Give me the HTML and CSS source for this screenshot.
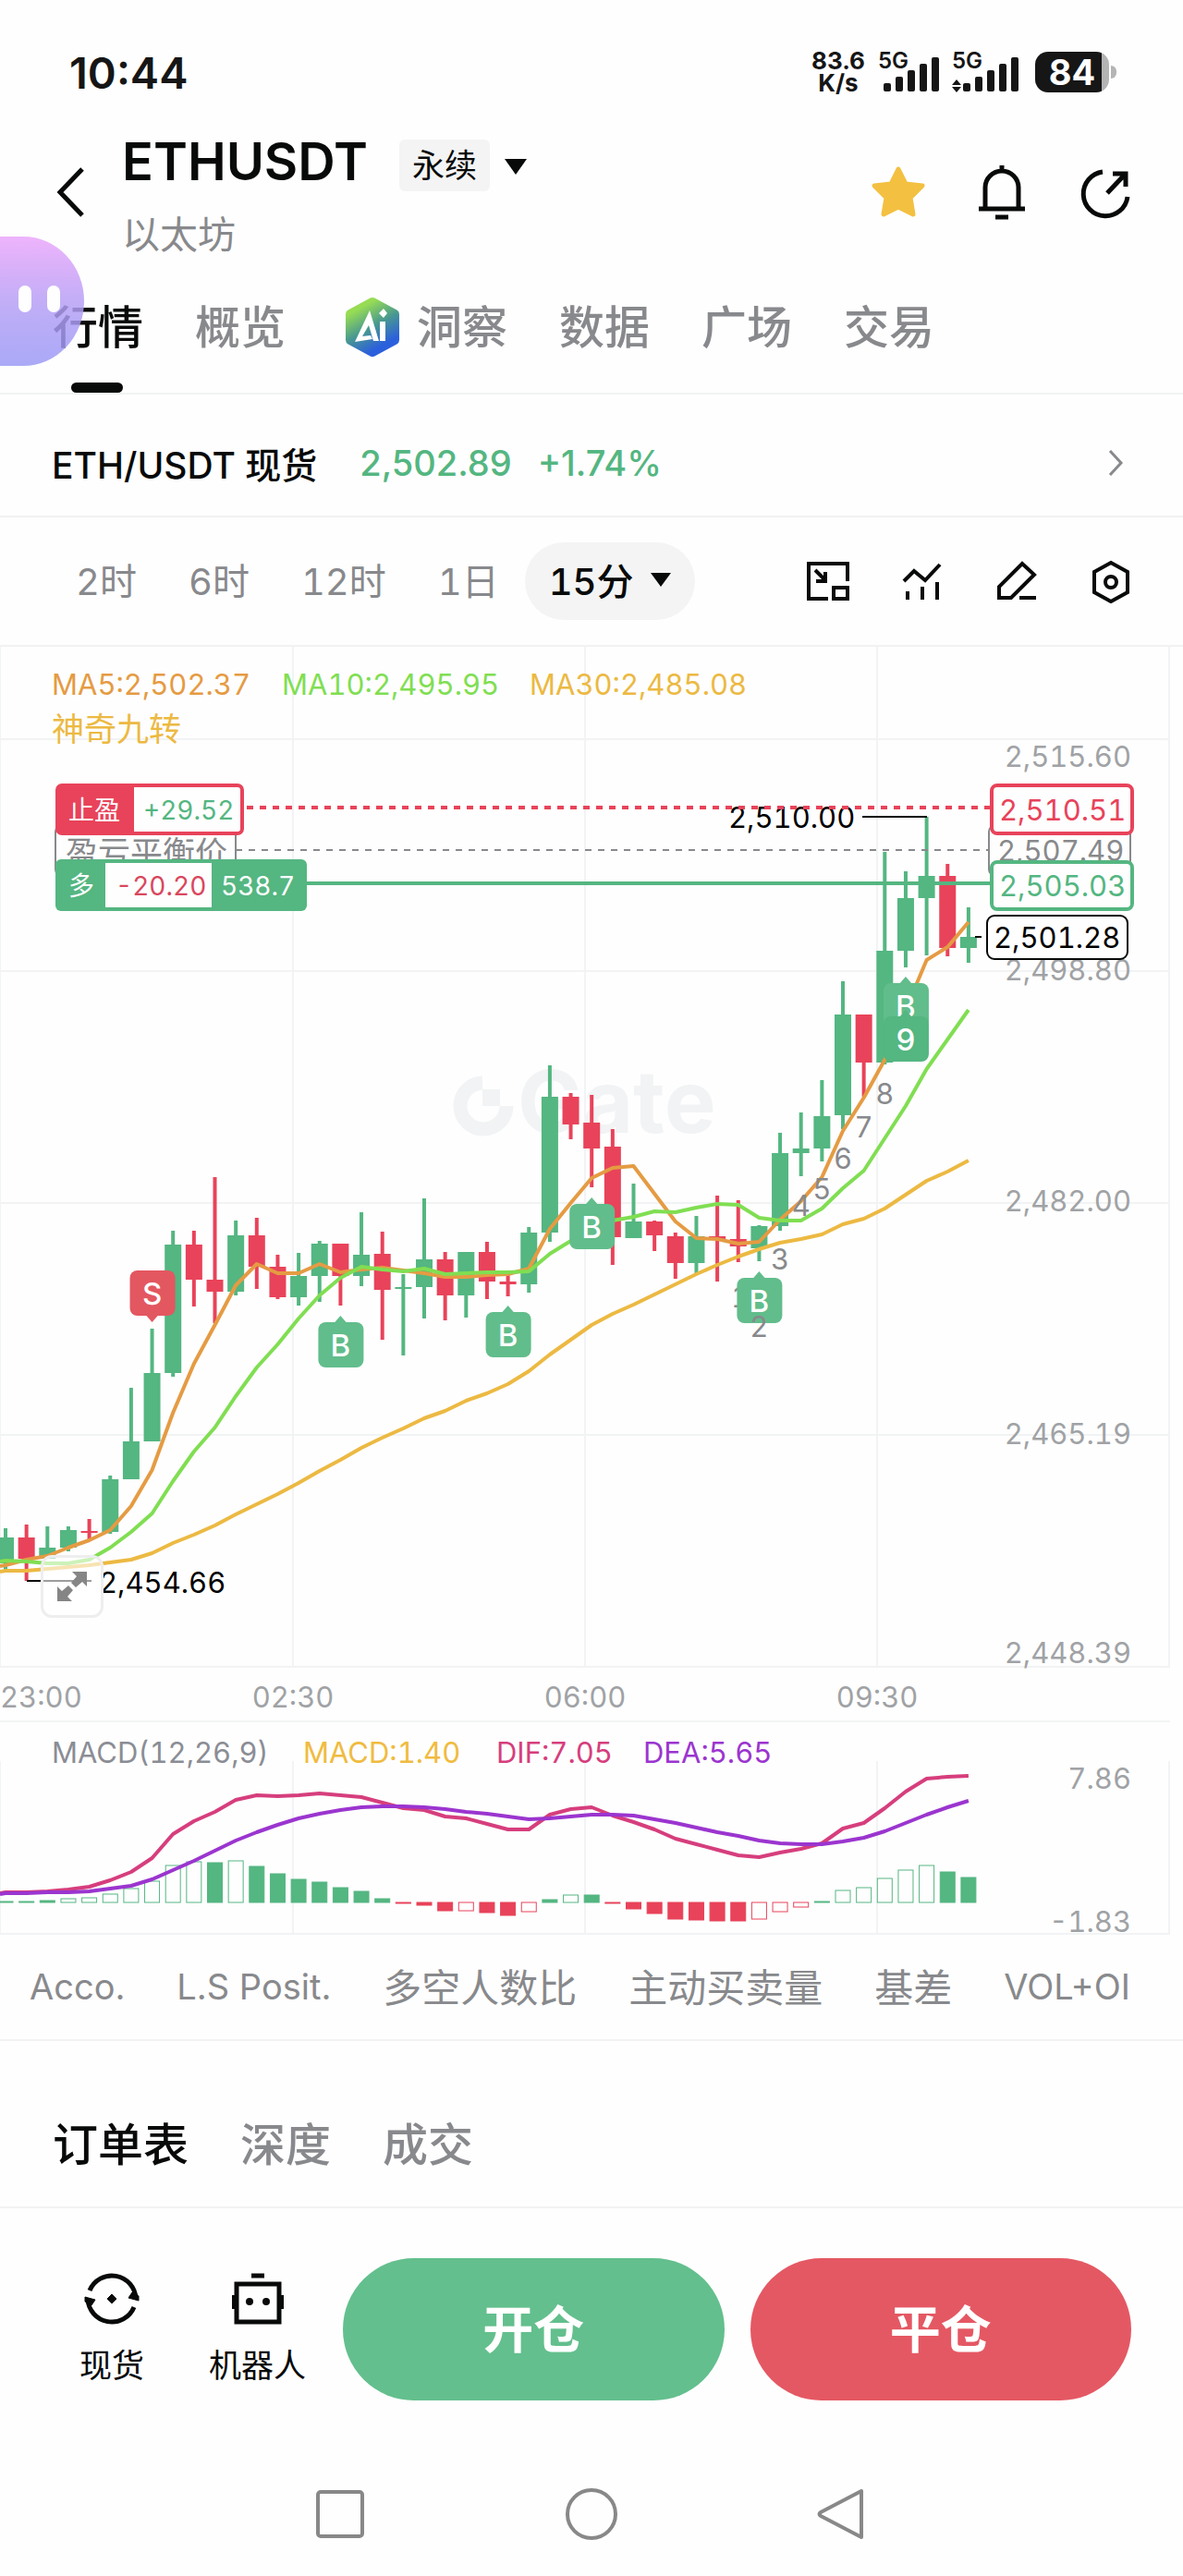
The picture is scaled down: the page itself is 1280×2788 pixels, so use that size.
FILE: index.html
```html
<!DOCTYPE html>
<html lang="zh-CN">
<head>
  <meta charset="UTF-8" />
  <meta name="viewport" content="width=device-width, initial-scale=1" />
  <title>ETHUSDT 永续</title>
  <link rel="stylesheet" href="styles.css">
</head>
<body>

  <div class="status-bar">
    <span class="clock">10:44</span>
    <div class="status-right">
      <div class="speed"><span>83.6</span><span>K/s</span></div>
      <div class="signal">
        <span class="net">5G</span>
        <svg width="66" height="46" viewBox="0 0 66 46" fill="#161616">
          <rect x="6" y="35" width="8" height="9" rx="2"/><rect x="19" y="28" width="8" height="16" rx="2"/><rect x="32" y="21" width="8" height="23" rx="2"/><rect x="45" y="14" width="8" height="30" rx="2"/><rect x="58" y="7" width="8" height="37" rx="2"/>
        </svg>
      </div>
      <div class="signal">
        <span class="net">5G</span>
        <svg width="72" height="46" viewBox="0 0 72 46" fill="#161616">
          <path d="M0 37l5-6 5 6zM0 39h10l-5 6z"/>
          <rect x="12" y="35" width="8" height="9" rx="2"/><rect x="25" y="28" width="8" height="16" rx="2"/><rect x="38" y="21" width="8" height="23" rx="2"/><rect x="51" y="14" width="8" height="30" rx="2"/><rect x="64" y="7" width="8" height="37" rx="2"/>
        </svg>
      </div>
      <div class="battery"><span class="level">84</span></div>
    </div>
  </div>

  <header class="header">
    <button class="icon-btn" aria-label="返回">
      <svg width="32" height="56" viewBox="0 0 32 56" fill="none" stroke="#080a09" stroke-width="5"><path d="M29 3L5 28l24 25"/></svg>
    </button>
    <div class="pair">
      <div class="pair-top">
        <h1>ETHUSDT</h1>
        <span class="badge">永续</span>
        <button class="icon-btn caret" aria-label="切换交易对">
          <svg width="24" height="17" viewBox="0 0 24 17"><path d="M0 0h24L12 17z" fill="#080a09"/></svg>
        </button>
      </div>
      <p class="pair-name">以太坊</p>
    </div>
    <div class="header-actions">
      <button class="icon-btn" aria-label="收藏">
        <svg width="60" height="60" viewBox="0 0 60 60"><path d="M30 5l8 16 18 2-13 13 3 18-16-8-16 8 3-18L4 23l18-2z" fill="#f3c041" stroke="#f3c041" stroke-width="5" stroke-linejoin="round"/></svg>
      </button>
      <button class="icon-btn" aria-label="提醒">
        <svg width="60" height="60" viewBox="0 0 60 60" fill="none" stroke="#080a09" stroke-width="5"><path d="M30 1v7M12 47V25a18 18 0 0 1 36 0v22M5 48h50M23 57h14"/></svg>
      </button>
      <button class="icon-btn" aria-label="分享">
        <svg width="60" height="60" viewBox="0 0 60 60" fill="none" stroke="#080a09" stroke-width="5"><path d="M27 8A24 24 0 1 0 54 35M32 31L51 11M38 10h14v14"/></svg>
      </button>
    </div>
  </header>

  <nav class="tabs">
    <a href="#" class="tab active">行情</a>
    <a href="#" class="tab">概览</a>
    <a href="#" class="tab tab-ai">
      <svg width="60" height="66" viewBox="0 0 60 66">
        <defs><linearGradient id="ai" x1="0.2" y1="0" x2="0.7" y2="1"><stop offset="0.1" stop-color="#97dc54"/><stop offset="0.5" stop-color="#4a9a8f"/><stop offset="0.9" stop-color="#2b60dc"/></linearGradient></defs>
        <path d="M30 6L54 19v28L30 60 6 47V19z" fill="url(#ai)" stroke="url(#ai)" stroke-width="10" stroke-linejoin="round"/>
        <path d="M27 15l10 33h-6l-5-17-7 12 9-1 2 4-19 3z" fill="#fff"/>
        <path d="M38 27h6v21h-6zM42 13l4 5-4 5-5-5z" fill="#fff"/>
      </svg>
      <span>洞察</span>
    </a>
    <a href="#" class="tab">数据</a>
    <a href="#" class="tab">广场</a>
    <a href="#" class="tab">交易</a>
    <div class="mascot"><i></i><i></i></div>
  </nav>

  <a href="#" class="spot">
    <span class="spot-name">ETH/USDT 现货</span>
    <span class="up">2,502.89</span>
    <span class="up change">+1.74%</span>
    <svg class="spot-arrow" width="18" height="30" viewBox="0 0 18 30" fill="none" stroke="#88898c" stroke-width="3"><path d="M3 2l12 13L3 28"/></svg>
  </a>

  <div class="periods">
    <div class="period-list">
      <button class="period">2时</button>
      <button class="period">6时</button>
      <button class="period">12时</button>
      <button class="period">1日</button>
    </div>
    <button class="period selected">15分
      <svg width="22" height="15" viewBox="0 0 22 15"><path d="M0 0h22L11 15z" fill="#080a09"/></svg>
    </button>
    <div class="tools">
      <button class="icon-btn" aria-label="小窗">
        <svg width="48" height="48" viewBox="0 0 48 48" fill="none" stroke="#080a09" stroke-width="4"><path d="M24 43H3V5h42v19M30 31h15v12H30zM10 12l11 11M21 14v10H11"/></svg>
      </button>
      <button class="icon-btn" aria-label="指标">
        <svg width="48" height="48" viewBox="0 0 48 48" fill="none" stroke="#080a09" stroke-width="4"><path d="M4 24l11-11 12 10L43 6M8 44v-9M24 44V30M40 44V25"/></svg>
      </button>
      <button class="icon-btn" aria-label="画图">
        <svg width="48" height="48" viewBox="0 0 48 48" fill="none" stroke="#080a09" stroke-width="4"><path d="M30 5l13 12-25 25H5V30zM27 42h18"/></svg>
      </button>
      <button class="icon-btn" aria-label="设置">
        <svg width="48" height="48" viewBox="0 0 48 48" fill="none" stroke="#080a09" stroke-width="4"><path d="M24 4l18 10v22L24 46 6 36V14z"/><circle cx="24" cy="25" r="6"/></svg>
      </button>
    </div>
  </div>

  <div class="chart">
    <svg id="chart" viewBox="0 0 1280 1394"></svg>
    <button class="expand" aria-label="全屏">
      <svg width="34" height="34" viewBox="0 0 34 34" fill="#858585"><path d="M17 1h16v16l-5-5-7 6-5-5 6-7zM17 33H1V17l5 5 7-6 5 5-6 7z"/></svg>
    </button>
  </div>

  <nav class="indicators">
    <a href="#" class="latin">Acco.</a>
    <a href="#" class="latin">L.S Posit.</a>
    <a href="#">多空人数比</a>
    <a href="#">主动买卖量</a>
    <a href="#">基差</a>
    <a href="#" class="latin">VOL+OI</a>
  </nav>

  <nav class="book-tabs">
    <a href="#" class="active">订单表</a>
    <a href="#">深度</a>
    <a href="#">成交</a>
  </nav>

  <div class="trade-bar">
    <a href="#" class="shortcut">
      <svg width="60" height="60" viewBox="0 0 60 60" fill="none" stroke="#080a09" stroke-width="5"><path d="M6 21a26 26 0 0 1 50 9M54 39a26 26 0 0 1-50-9"/><path d="M59 32l-11-3 4-6 7 4zM1 28l11 3-4 6-7-4zM30 25l5 5-5 5-5-5z" fill="#080a09" stroke-width="1"/></svg>
      <span>现货</span>
    </a>
    <a href="#" class="shortcut">
      <svg width="60" height="60" viewBox="0 0 60 60" fill="none" stroke="#080a09" stroke-width="5"><path d="M23 5h14M7 14h46v41H7z"/><path d="M4 26v15M56 26v15" stroke-width="4"/><circle cx="21" cy="33" r="4" fill="#080a09" stroke="none"/><circle cx="39" cy="33" r="4" fill="#080a09" stroke="none"/></svg>
      <span>机器人</span>
    </a>
    <button class="trade open">开仓</button>
    <button class="trade close">平仓</button>
  </div>

  <div class="system-nav">
    <button class="icon-btn" aria-label="最近任务"><svg width="60" height="60" viewBox="0 0 60 60" fill="none" stroke="#888" stroke-width="4"><rect x="6" y="6" width="48" height="48" rx="3"/></svg></button>
    <button class="icon-btn" aria-label="主页"><svg width="60" height="60" viewBox="0 0 60 60" fill="none" stroke="#888" stroke-width="4"><circle cx="30" cy="30" r="26"/></svg></button>
    <button class="icon-btn" aria-label="后退"><svg width="60" height="60" viewBox="0 0 60 60" fill="none" stroke="#888" stroke-width="4" stroke-linejoin="round"><path d="M50 5v50L6 32q-3-2 0-4z"/></svg></button>
  </div>

  <script src="chart.js"></script>
</body>
</html>
```

FILE: styles.css
```css
* {
  box-sizing: border-box;
}

body {
  margin: 0;
  background: #fefefe;
  color: #080a09;
  font-family: Inter, "Noto Sans CJK SC", sans-serif;
}

a {
  color: inherit;
  text-decoration: none;
}

button {
  font: inherit;
  color: inherit;
  border: none;
  background: none;
  padding: 0;
  cursor: pointer;
}

svg {
  display: block;
}

.icon-btn {
  display: flex;
}

/* status bar */
.status-bar {
  display: flex;
  justify-content: space-between;
  align-items: center;
  height: 140px;
  padding: 16px 80px 0 75px;
  color: #161616;
}

.clock {
  font-size: 47px;
  font-weight: 600;
}

.status-right {
  display: flex;
  align-items: center;
  gap: 14px;
}

.speed {
  display: flex;
  flex-direction: column;
  align-items: center;
  font-size: 26px;
  font-weight: 700;
  line-height: 24px;
}

.signal {
  position: relative;
}

.net {
  position: absolute;
  left: 0;
  top: 0;
  font-size: 24px;
  font-weight: 600;
  line-height: 22px;
}

.battery {
  position: relative;
  width: 80px;
  height: 44px;
  margin-left: 4px;
  border-radius: 14px;
  background: linear-gradient(90deg, #161616 72px, #b4b4b4 72px);
  color: #fff;
  text-align: center;
}

.battery::after {
  content: "";
  position: absolute;
  left: 82px;
  top: 15px;
  width: 6px;
  height: 14px;
  border-radius: 0 6px 6px 0;
  background: #b4b4b4;
}

.level {
  font-size: 38px;
  font-weight: 700;
  line-height: 44px;
}

/* header */
.header {
  display: flex;
  align-items: center;
  height: 144px;
  padding: 0 54px 8px 60px;
}

.pair {
  flex: 1;
  margin-left: 40px;
}

.pair-top {
  display: flex;
  align-items: center;
}

h1 {
  margin: 0;
  font-size: 56px;
  font-weight: 600;
  line-height: 72px;
}

.badge {
  margin: 8px 16px 0 34px;
  padding: 0 14px;
  border-radius: 6px;
  background: #f4f4f4;
  font-size: 35px;
  line-height: 56px;
}

.caret {
  margin-top: 12px;
}

.pair-name {
  margin: 19px 0 0;
  font-size: 41px;
  line-height: 48px;
  color: #88898c;
}

.header-actions {
  display: flex;
  gap: 52px;
}

/* main tabs */
.tabs {
  position: relative;
  display: flex;
  gap: 56px;
  height: 143px;
  padding-left: 57px;
  border-bottom: 2px solid #f1f2f3;
}

.tab {
  position: relative;
  display: flex;
  align-items: center;
  padding-bottom: 8px;
  font-size: 49px;
  font-weight: 500;
  color: #88898c;
}

.tab.active {
  color: #080a09;
}

.tab.active::after {
  content: "";
  position: absolute;
  left: 20px;
  bottom: 0;
  width: 56px;
  height: 11px;
  border-radius: 6px;
  background: #080a09;
}

.tab-ai {
  gap: 18px;
  margin-left: 8px;
}

.tab-ai svg {
  margin-top: 6px;
}

.mascot {
  position: absolute;
  left: 0;
  top: -28px;
  width: 91px;
  height: 140px;
  display: flex;
  gap: 17px;
  padding: 53px 0 0 20px;
  border-radius: 0 66px 66px 0 / 0 70px 70px 0;
  background: linear-gradient(#eba6fc, #b79ff6 50%, #9b9af6);
  opacity: 0.84;
}

.mascot i {
  width: 14px;
  height: 29px;
  border-radius: 7px;
  background: #fff;
}

/* spot price row */
.spot {
  display: flex;
  align-items: center;
  height: 133px;
  padding: 16px 64px 0 56px;
  border-bottom: 2px solid #f1f2f3;
  font-size: 39px;
  font-weight: 500;
}

.up {
  margin-left: 46px;
  color: #54b681;
  font-size: 38px;
}

.change {
  margin-left: 28px;
}

.spot-arrow {
  margin-left: auto;
}

/* periods */
.periods {
  display: flex;
  align-items: center;
  height: 140px;
  padding: 0 54px 0 82px;
  border-bottom: 2px solid #f1f2f3;
}

.period-list {
  display: flex;
  gap: 56px;
}

.period {
  padding-bottom: 4px;
  font-size: 40px;
  font-variant-numeric: tabular-nums;
  color: #88898c;
}

.period.selected {
  display: flex;
  align-items: center;
  gap: 18px;
  height: 84px;
  margin-left: 28px;
  padding: 0 26px 4px;
  border-radius: 42px;
  background: #f4f4f4;
  color: #080a09;
  font-weight: 500;
}

.tools {
  display: flex;
  gap: 54px;
  margin-left: auto;
}

/* chart */
.chart {
  position: relative;
}

#chart {
  width: 100%;
  font-size: 31px;
  font-variant-numeric: tabular-nums;
}

.expand {
  position: absolute;
  left: 3.4%;
  top: 70.5%;
  width: 68px;
  height: 68px;
  display: flex;
  align-items: center;
  justify-content: center;
  border: 3px solid #eee;
  border-radius: 12px;
  background: rgba(255, 255, 255, 0.6);
}

.grid {
  stroke: #f1f3f4;
  stroke-width: 2;
}

.candle.green, .bar.green {
  fill: #54b681;
  stroke: #54b681;
}

.candle.red, .bar.red {
  fill: #e8435a;
  stroke: #e8435a;
}

.candle rect {
  stroke: none;
}

.candle line {
  stroke-width: 4;
}

.bar.hollow {
  fill: #fefefe;
}

.curve {
  fill: none;
  stroke-width: 4;
  stroke-linejoin: round;
}

.watermark {
  fill: #f1f3f4;
  font-size: 94px;
  font-weight: 700;
}

.axis {
  fill: #a0a2a5;
}

.count {
  fill: #88898c;
  text-anchor: middle;
}

.mark-text {
  fill: #fff;
  font-size: 33px;
  font-weight: 500;
  text-anchor: middle;
}

.small {
  font-size: 28px;
}

.name {
  font-size: 35px;
}

/* indicator list */
.indicators {
  display: flex;
  align-items: center;
  justify-content: space-between;
  height: 115px;
  padding: 0 57px 4px 32px;
  border-bottom: 2px solid #f1f2f3;
  font-size: 42px;
  white-space: nowrap;
  color: #88898c;
}

.latin {
  padding-top: 2px;
  font-size: 38px;
}

/* order book tabs */
.book-tabs {
  display: flex;
  align-items: center;
  gap: 56px;
  height: 181px;
  padding: 38px 57px 0;
  border-bottom: 2px solid #f1f2f3;
  font-size: 49px;
  font-weight: 500;
  color: #88898c;
}

.book-tabs .active {
  color: #080a09;
}

/* bottom bar */
.trade-bar {
  display: flex;
  align-items: center;
  gap: 28px;
  padding: 54px 56px 56px 72px;
}

.shortcut {
  display: flex;
  flex-direction: column;
  align-items: center;
  gap: 18px;
  min-width: 98px;
  font-size: 35px;
  line-height: 48px;
}

.shortcut + .shortcut {
  margin-left: 28px;
}

.trade {
  flex: 1;
  height: 154px;
  padding-bottom: 8px;
  border-radius: 77px;
  color: #fff;
  font-size: 55px;
  font-weight: 700;
}

.trade.open {
  margin-left: 12px;
  background: #63bf8d;
}

.trade.close {
  background: #e45863;
}

.system-nav {
  display: flex;
  justify-content: center;
  gap: 212px;
  padding: 37px 0;
}
```

FILE: chart.js
```js
const svg = document.getElementById('chart');
const NS = 'http://www.w3.org/2000/svg';

const GREEN = '#54b681';
const RED = '#e8435a';
const STEP = 22.65;

// color, high, body top, body bottom, low
const candles = [
  ['g',954,964,992,999], ['r',950,964,987,1011], ['g',952,975,987,987], ['g',952,956,975,979],
  ['r',944,957,959,967], ['g',897,901,958,960], ['g',802,860,901,901], ['g',738,786,860,860],
  ['g',632,647,786,790], ['r',632,647,685,714], ['r',574,685,698,732], ['g',621,637,698,702],
  ['r',618,637,671,695], ['r',658,671,704,706], ['g',656,681,704,713], ['g',643,646,681,709],
  ['r',646,646,681,713], ['g',612,658,681,692], ['r',633,657,696,750], ['g',679,693,695,767],
  ['g',597,663,693,727], ['r',655,663,702,729], ['g',655,655,702,726], ['r',644,655,687,706],
  ['r',675,687,690,703], ['g',628,634,690,699], ['g',453,487,634,644], ['r',483,487,517,533],
  ['r',485,515,543,585], ['r',522,541,639,669], ['g',581,622,640,640], ['r',621,622,637,654],
  ['r',634,638,667,684], ['g',616,638,667,679], ['r',594,638,641,687], ['r',599,641,649,666],
  ['g',626,627,651,665], ['g',526,548,627,632], ['g',504,543,548,573], ['g',469,508,543,557],
  ['g',362,398,507,522], ['r',398,398,450,487], ['g',222,329,450,452], ['g',243,272,329,347],
  ['g',184,248,272,334], ['r',235,248,326,335], ['g',282,314,326,342]
];

const ma5 = [994,988,984,975,967,956,930,891,829,776,734,691,668,678,678,668,677,674,672,675,678,682,682,680,679,673,630,602,575,564,562,592,622,640,641,646,644,620,600,574,524,488,447,393,339,325,298];
const ma10 = [989,990,992,992,988,975,958,938,903,871,845,811,780,755,727,702,683,671,674,676,673,679,678,677,677,676,657,643,632,621,617,611,612,607,603,604,618,621,621,608,586,567,532,497,457,425,393];
const ma30 = [1000,1000,998,996,994,991,988,981,970,961,951,939,928,917,905,892,880,867,856,846,835,827,816,808,798,784,766,750,734,722,712,701,690,679,669,660,652,645,641,636,625,619,608,593,578,568,556];
const dif = [1348,1348,1347,1345,1342,1335,1326,1311,1285,1271,1261,1248,1243,1244,1243,1241,1243,1245,1251,1257,1259,1266,1268,1274,1280,1280,1264,1258,1256,1265,1272,1280,1290,1296,1302,1308,1310,1305,1301,1295,1279,1273,1257,1239,1225,1223,1222];
const dea = [1349,1349,1348,1348,1347,1344,1341,1334,1324,1314,1303,1292,1283,1275,1268,1263,1259,1256,1255,1255,1256,1258,1261,1263,1266,1269,1268,1266,1264,1264,1265,1269,1273,1278,1283,1287,1292,1295,1296,1296,1293,1289,1282,1273,1264,1256,1249];

const macd = [1,1,2,4,5,9,15,23,40,44,43,45,39,31,25,22,16,12,4,-1,-3,-9,-9,-11,-14,-10,3,8,8,-1,-7,-12,-18,-19,-20,-20,-18,-10,-5,1,13,16,26,35,40,33,27];
const hollow = [3,4,5,6,7,8,9,11,22,25,27,36,37,38,40,41,42,43,44];

function add(tag, attrs, parent) {
  const el = document.createElementNS(NS, tag);
  for (const key in attrs) el.setAttribute(key, attrs[key]);
  (parent || svg).appendChild(el);
  return el;
}

function line(x1, y1, x2, y2, attrs) {
  add('line', { x1, y1, x2, y2, ...attrs });
}

function box(x, y, width, height, attrs) {
  add('rect', { x, y, width, height, ...attrs });
}

function text(x, y, str, attrs) {
  add('text', { x, y, ...attrs }).textContent = str;
}

function cx(i) {
  return 6 + i * STEP;
}

function curve(values, color) {
  const points = values.map((y, i) => `${cx(i)},${y}`);
  points.unshift(`0,${values[0] + 1}`);
  add('polyline', { points: points.join(' '), class: 'curve', stroke: color });
}

function marker(i, y, label, color, down) {
  const x = cx(i);
  const tip = down ? `M${x - 7} ${y + 48}l7 8 7-8z` : `M${x - 7} ${y + 1}l7-8 7 8z`;
  box(x - 24, y, 49, 49, { rx: 8, fill: color });
  add('path', { d: tip, fill: color });
  text(x, y + 37, label, { class: 'mark-text' });
}

function drawGrid() {
  [100, 351, 602, 853, 1104, 1163, 1393].forEach(y => line(0, y, 1266, y, { class: 'grid' }));
  [0, 317, 633, 949, 1265].forEach(x => {
    line(x, 0, x, 1104, { class: 'grid' });
    line(x, 1206, x, 1393, { class: 'grid' });
  });
}

function drawWatermark() {
  add('path', { d: 'M522 472A25 25 0 1 0 548 497', fill: 'none', stroke: '#f1f3f4', 'stroke-width': 15 });
  box(522, 479, 19, 18, { fill: '#f1f3f4' });
  text(560, 526, 'Gate', { class: 'watermark' });
}

function drawCandles() {
  candles.forEach(([c, high, top, bottom, low], i) => {
    const g = add('g', { class: 'candle ' + (c === 'g' ? 'green' : 'red') });
    add('line', { x1: cx(i), x2: cx(i), y1: high, y2: low }, g);
    add('rect', { x: cx(i) - 9, y: top, width: 18, height: bottom - top }, g);
  });
}

function drawMacd() {
  macd.forEach((v, i) => {
    const cls = 'bar ' + (v > 0 ? 'green' : 'red') + (hollow.includes(i) ? ' hollow' : '');
    box(cx(i) - 8, v > 0 ? 1359 - v : 1359, 16, Math.abs(v), { class: cls });
  });
  curve(dif, '#d63e7d');
  curve(dea, '#9b35cf');
}

function drawLegend() {
  text(56, 52, 'MA5:2,502.37', { fill: '#e59b43' });
  text(305, 52, 'MA10:2,495.95', { fill: '#80de52' });
  text(573, 52, 'MA30:2,485.08', { fill: '#ecb942' });
  text(56, 102, '神奇九转', { fill: '#ecb942', class: 'name' });
  text(56, 1208, 'MACD(12,26,9)', { fill: '#8b8d95' });
  text(328, 1208, 'MACD:1.40', { fill: '#f0bb40' });
  text(537, 1208, 'DIF:7.05', { fill: '#d63e7d' });
  text(696, 1208, 'DEA:5.65', { fill: '#9b35cf' });
}

function drawAxes() {
  const right = { class: 'axis', 'text-anchor': 'end' };
  text(1224, 130, '2,515.60', right);
  text(1224, 361, '2,498.80', right);
  text(1224, 611, '2,482.00', right);
  text(1224, 863, '2,465.19', right);
  text(1224, 1100, '2,448.39', right);
  text(1224, 1236, '7.86', right);
  text(1224, 1391, '-1.83', right);

  const middle = { class: 'axis', 'text-anchor': 'middle' };
  text(0, 1148, '23:00', { class: 'axis' });
  text(317, 1148, '02:30', middle);
  text(633, 1148, '06:00', middle);
  text(949, 1148, '09:30', middle);
}

function drawMarkers() {
  text(801, 715, '1', { class: 'count' });
  marker(7, 675, 'S', '#e35761', true);
  marker(16, 731, 'B', '#61bd8b');
  marker(24, 720, 'B', '#61bd8b');
  marker(28, 603, 'B', '#61bd8b');
  marker(36, 683, 'B', '#61bd8b');
  marker(43, 364, 'B', '#61bd8b');
  marker(43, 400, '9', GREEN);

  [[36, 747, 2], [37, 674, 3], [38, 616, 4], [39, 598, 5], [40, 565, 6], [41, 531, 7], [42, 495, 8]]
    .forEach(([i, y, n]) => text(cx(i), y, n, { class: 'count' }));
}

function drawOrders() {
  // highest and lowest price
  line(933, 184, 1003, 184, { stroke: '#080a09', 'stroke-width': 2 });
  text(788, 196, '2,510.00', {});
  line(29, 1011, 99, 1011, { stroke: '#080a09', 'stroke-width': 2 });
  text(107, 1024, '2,454.66', {});

  // break-even price
  line(255, 220, 1069, 220, { stroke: '#88898c', 'stroke-width': 2, 'stroke-dasharray': '7 7' });
  box(60, 194, 195, 53, { fill: '#fefefe', stroke: '#88898c', 'stroke-width': 2, rx: 6 });
  text(71, 236, '盈亏平衡价', { fill: '#88898c', class: 'name' });
  box(1070, 194, 153, 53, { fill: '#fefefe', stroke: '#88898c', 'stroke-width': 2, rx: 6 });
  text(1079, 232, '2,507.49', { fill: '#88898c' });

  // take profit
  line(267, 174, 1071, 174, { stroke: RED, 'stroke-width': 4, 'stroke-dasharray': '7 7' });
  box(62, 150, 200, 52, { fill: '#fefefe', stroke: RED, 'stroke-width': 4, rx: 5 });
  box(62, 150, 83, 52, { fill: RED });
  text(74, 187, '止盈', { fill: '#fff', class: 'small' });
  text(155, 187, '+29.52', { fill: GREEN, class: 'small' });
  box(1073, 150, 152, 52, { fill: '#fefefe', stroke: RED, 'stroke-width': 4, rx: 6 });
  text(1081, 188, '2,510.51', { fill: RED });

  // open position
  line(332, 256, 1071, 256, { stroke: GREEN, 'stroke-width': 4 });
  box(60, 230, 272, 56, { fill: GREEN, rx: 6 });
  box(114, 234, 115, 48, { fill: '#fefefe' });
  text(74, 269, '多', { fill: '#fff', class: 'small' });
  text(125, 269, '-20.20', { fill: '#d9475d', class: 'small' });
  text(239, 269, '538.7', { fill: '#fff', class: 'small' });
  box(1073, 233, 152, 51, { fill: '#fefefe', stroke: GREEN, 'stroke-width': 4, rx: 6 });
  text(1081, 270, '2,505.03', { fill: GREEN });

  // last price
  line(1055, 314, 1062, 314, { stroke: '#080a09', 'stroke-width': 2 });
  box(1068, 291, 152, 47, { fill: '#fefefe', stroke: '#080a09', 'stroke-width': 2, rx: 8 });
  text(1075, 326, '2,501.28', {});
}

drawGrid();
drawWatermark();
drawCandles();
curve(ma30, '#ecb942');
curve(ma5, '#e59b43');
curve(ma10, '#80de52');
drawAxes();
drawMacd();
drawLegend();
drawMarkers();
drawOrders();
```
